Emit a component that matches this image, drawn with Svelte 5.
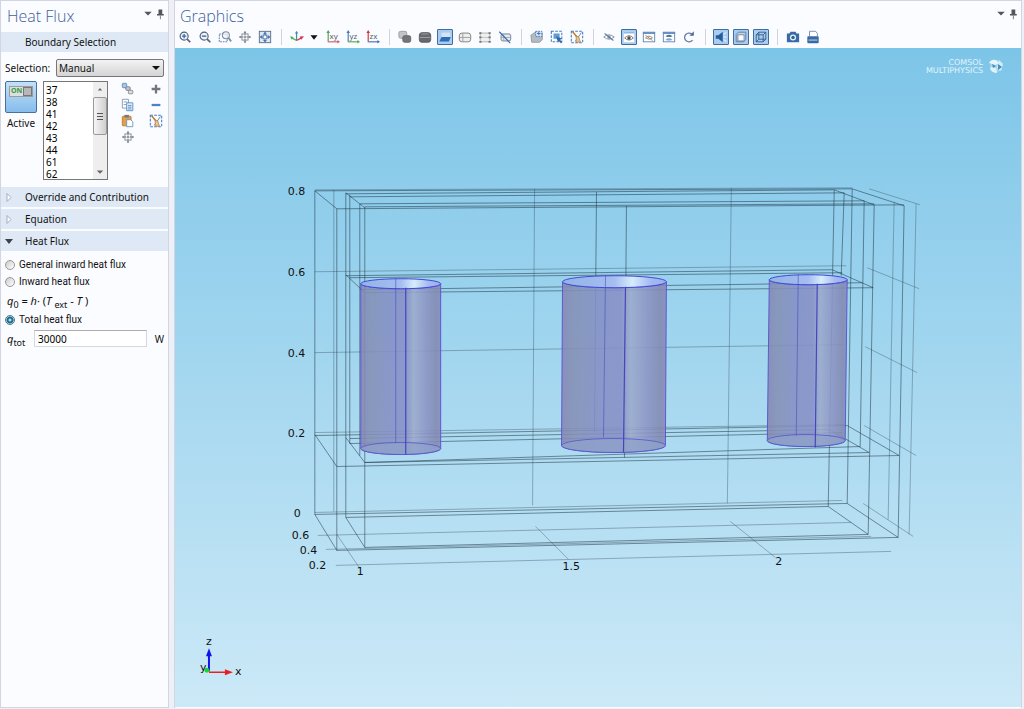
<script>
let mode = $state('total');
let active = $state(true);
let flux = $state('30000');

const boundaries = [37, 38, 41, 42, 43, 44, 61, 62, 63, 64];

const toolbar = [
  ['zoom-in', 'zoom-out', 'zoom-box', 'zoom-selected', 'zoom-extents'],
  ['default-view', 'view-menu', 'view-xy', 'view-yz', 'view-zx'],
  ['select-objects', 'select-domains', 'select-boundaries', 'select-edges', 'select-points', 'select-off'],
  ['select-all', 'select-box', 'deselect-box'],
  ['hide', 'show-selected', 'show-hidden', 'show-all', 'reset-hiding'],
  ['scene-light', 'transparency', 'wireframe'],
  ['snapshot', 'print'],
];
const pressed = ['select-boundaries', 'show-selected', 'scene-light', 'transparency', 'wireframe'];

// x1, y1, x2, y2
const grid = [
  [315, 190, 853, 188], [315, 272, 847, 266], [315, 353, 845, 345], [315, 433, 845, 425], [315, 513, 843, 501],
  [334, 190, 334, 512], [535, 189, 533, 506], [732, 188, 728, 504],
  [318, 536, 852, 523], [326, 550, 872, 537], [336, 566, 892, 552],
  [337, 535, 360, 569], [536, 527, 569, 560], [731, 522, 776, 558],
  [870, 189, 921, 205], [868, 268, 920, 289], [866, 347, 918, 373], [865, 426, 917, 456], [864, 504, 914, 537],
  [895, 202, 889, 520], [917, 204, 910, 535],
];
const edges = [
  [315, 191, 337, 209], [346, 193, 365, 208], [315, 191, 853, 189], [346, 194, 835, 190],
  [350, 197, 845, 193], [360, 204, 865, 201], [365, 207, 875, 204], [337, 209, 905, 205],
  [853, 189, 905, 206], [835, 190, 875, 205],
  [315, 191, 315, 515], [337, 209, 337, 551], [346, 193, 346, 518], [350, 195, 350, 444],
  [360, 204, 360, 456], [365, 207, 365, 548],
  [597, 192, 595, 433], [627, 206, 625, 458],
  [835, 190, 829, 507], [845, 193, 842, 276], [853, 189, 848, 504], [865, 201, 861, 447],
  [875, 205, 869, 535], [905, 206, 899, 538],
  [346, 275, 365, 293], [346, 276, 833, 270], [350, 278, 843, 273], [360, 290, 863, 283],
  [365, 293, 874, 288], [833, 270, 874, 288],
  [315, 435, 337, 467], [315, 436, 848, 426], [346, 438, 365, 463], [350, 439, 830, 430],
  [350, 444, 843, 433], [365, 463, 861, 447], [365, 463, 870, 453], [337, 467, 900, 456],
  [848, 426, 900, 456], [830, 430, 870, 453],
  [315, 515, 337, 551], [315, 515, 848, 504], [346, 518, 365, 548], [346, 518, 829, 507],
  [365, 548, 869, 535], [337, 551, 899, 538], [848, 504, 899, 538], [829, 507, 869, 535],
];
const cylinders = [
  {x: 401, y: 284, rx: 40, ry: 5, bx: 401, by: 449, bry: 6, seams: [[396, 279, 396, 443], [406, 288, 406, 455]]},
  {x: 615, y: 282, rx: 52, ry: 6, bx: 614, by: 446, bry: 7, seams: [[606, 276, 604, 438], [626, 287, 624, 453]]},
  {x: 809, y: 280, rx: 39, ry: 5, bx: 807, by: 441, bry: 6, seams: [[799, 275, 797, 436], [818, 284, 816, 448]]},
];
const labels = [
  ['0.8', 288, 195], ['0.6', 288, 276], ['0.4', 288, 357], ['0.2', 288, 437], ['0', 294, 518],
  ['0.6', 292, 540], ['0.4', 300, 555], ['0.2', 309, 570],
  ['1', 357, 576], ['1.5', 563, 571], ['2', 776, 566],
  ['z', 206, 646], ['x', 235, 676], ['y', 200, 672],
];
</script>

{#snippet lens()}
  <circle cx="7" cy="7" r="4.6" fill="#eef3fa" stroke="#566070" stroke-width="1.3" />
  <path d="M10.5 10.5L14 14" stroke="#566070" stroke-width="2" />
{/snippet}

{#snippet eye(y)}
  <path d="M3 {y}Q8 {y - 5} 13 {y}Q8 {y + 5} 3 {y}Z" fill="#fff" stroke="#6b6d62" />
  <circle cx="8" cy={y} r="2" fill="#4f5048" />
{/snippet}

{#snippet closedEye()}
  <path d="M2 8Q8 3 14 8Q8 13 2 8Z" fill="none" stroke="#808b9d" />
  <circle cx="8" cy="8" r="2" fill="#8992a2" />
  <path d="M3 4L13 12" stroke="#64779b" stroke-width="1.2" />
{/snippet}

{#snippet broom()}
  <path d="M3 2L8 8" stroke="#b97836" stroke-width="1.6" />
  <path d="M7 7L10 8L12 14H7Z" fill="#e9c690" stroke="#a57849" stroke-width=".8" />
{/snippet}

{#snippet windowFrame()}
  <rect x="1.5" y="2.5" width="13" height="11" fill="#fff" stroke="#5d7fae" />
  <path d="M1 3.5H15" stroke="#5d8bc6" stroke-width="2" />
{/snippet}

{#snippet crosshair()}
  <rect x="4.5" y="4.5" width="7" height="7" fill="#fff" stroke="#7c848f" />
  <path d="M8 2V6M8 10V14M2 8H6M10 8H14M6.5 8H9.5M8 6.5V9.5" stroke="#69717d" />
  <path d="M6.500 3L8 1L9.500 3ZM6.500 13L8 15L9.500 13ZM3 6.500L1 8L3 9.500ZM13 6.500L15 8L13 9.500Z" fill="#69717d" />
{/snippet}

{#snippet icon(name)}
  <svg viewBox="0 0 16 16" aria-hidden="true">
    {#if name === 'zoom-in'}
      {@render lens()}
      <path d="M4.5 7H9.5M7 4.5V9.5" stroke="#3270b8" stroke-width="1.6" />
    {:else if name === 'zoom-out'}
      {@render lens()}
      <path d="M4.5 7H9.5" stroke="#3270b8" stroke-width="1.6" />
    {:else if name === 'zoom-box'}
      <rect x="1.5" y="4.5" width="9" height="9" fill="none" stroke="#5f84b5" stroke-width="1.2" stroke-dasharray="2 1" />
      <circle cx="9" cy="6" r="4" fill="#eef3fa" fill-opacity=".7" stroke="#858d9a" stroke-width="1.2" />
      <path d="M12 9L15 13" stroke="#858d9a" stroke-width="2" />
    {:else if name === 'zoom-selected' || name === 'center'}
      {@render crosshair()}
    {:else if name === 'zoom-extents'}
      <rect x="1.5" y="1.5" width="13" height="13" fill="#dbe8f6" stroke="#5a6678" />
      <path d="M8 2V14M2 8H14" stroke="#4777b8" />
      <path d="M5.5 5L8 2L10.5 5ZM5.5 11L8 14L10.5 11ZM5 5.5L2 8L5 10.5ZM11 5.5L14 8L11 10.5Z" fill="#4777b8" />
      <rect x="6" y="6" width="4" height="4" fill="#fff" stroke="#687c97" stroke-width=".8" />
    {:else if name === 'default-view'}
      <path d="M7.5 2V12" stroke="#438cb2" stroke-width="1.4" />
      <path d="M5.5 4L7.5 1L9.5 4Z" fill="#438cb2" />
      <path d="M7.5 12L2 9" stroke="#4fae58" stroke-width="1.5" />
      <path d="M0 7L4 8L2 11Z" fill="#4fae58" />
      <path d="M7.5 12L13 9" stroke="#d43751" stroke-width="1.5" />
      <path d="M11 7.5L16 7L13 11Z" fill="#d43751" />
    {:else if name === 'view-menu'}
      <path d="M4 6H12L8 11Z" fill="#111" />
    {:else if name === 'view-xy' || name === 'view-yz' || name === 'view-zx'}
      <path d="M2.5 2V13" stroke={name === 'view-xy' ? '#4f9f55' : name === 'view-yz' ? '#3f78bd' : '#c8333f'} stroke-width="1.3" />
      <path d="M2 13.5H14" stroke={name === 'view-xy' ? '#d95862' : name === 'view-yz' ? '#55a948' : '#4272b9'} stroke-width="1.3" />
      <path d="M.5 3.5L2.5 0L4.5 3.5Z" fill={name === 'view-xy' ? '#4f9f55' : name === 'view-yz' ? '#3f78bd' : '#c8333f'} />
      <path d="M13 11.5L16 13.5L13 15.5Z" fill={name === 'view-xy' ? '#d95862' : name === 'view-yz' ? '#55a948' : '#4272b9'} />
      <text x="4" y="10" class="axis-name">{name.slice(5)}</text>
    {:else if name === 'select-objects'}
      <rect x="1" y="1.5" width="9" height="8" rx="2" fill="#c2c4c7" stroke="#999" />
      <rect x="5.5" y="6.5" width="9" height="7.5" rx="2" fill="#737579" stroke="#606367" />
    {:else if name === 'select-domains'}
      <rect x="1.5" y="3" width="13" height="11" rx="3" fill="#66696d" stroke="#55585d" />
      <path d="M2 8.5H14" stroke="#a1a4a8" />
      <path d="M4 4.5H12" stroke="#a1a4a8" />
    {:else if name === 'select-boundaries'}
      <path d="M4 3H14V8H4Z" fill="#d5e2f2" />
      <path d="M4 8H14.5L12.5 13H1.5Z" fill="#286dba" />
    {:else if name === 'select-edges'}
      <rect x="1.5" y="3.5" width="13" height="10" rx="3" fill="#eee" stroke="#777" />
      <path d="M5.5 3.5V13M2 8.5H14" stroke="#999" />
    {:else if name === 'select-points'}
      <rect x="2.5" y="3.5" width="11" height="10" fill="#f0f0f0" stroke="#aaa" />
      <path d="M3 8.5H13" stroke="#bbb" />
      <path d="M1.5 3.5H4M1.5 8.5H4M1.5 13.5H4M12 3.5H14.500M12 8.5H14.500M12 13.5H14.500" stroke="#777" stroke-width="2" />
    {:else if name === 'select-off'}
      <rect x="3.5" y="4.5" width="11" height="8" rx="2" fill="#e6e9ed" stroke="#667386" />
      <path d="M6.5 5V12M4 8.5H14" stroke="#a0a8b2" />
      <path d="M1.5 2L14 15" stroke="#356eb4" stroke-width="1.4" />
    {:else if name === 'select-all'}
      <path d="M1 6L5 3H14V11L11 14H2Z" fill="#b5bbc4" stroke="#91979f" />
      <rect x="6.5" y="1.5" width="7" height="6" fill="#d8e8f8" stroke="#4177b7" stroke-dasharray="2 1" />
      <path d="M8 4H12M10 2V6" stroke="#3d6ca6" />
    {:else if name === 'select-box'}
      <rect x="1.5" y="1.5" width="12" height="12" fill="none" stroke="#3f7cc0" stroke-width="1.2" stroke-dasharray="3 1.5" />
      <rect x="4" y="4" width="7" height="6" fill="#5f9cda" />
      <path d="M7 7L14 10L11.5 11L14 14L12.5 15L10 12.5L9 14Z" fill="#35689f" />
    {:else if name === 'deselect-box' || name === 'clear'}
      <rect x="1.5" y="1.5" width="13" height="13" fill="none" stroke="#3f7cc0" stroke-width="1.2" stroke-dasharray="3 1.5" />
      <path d="M13 3L6 13" stroke="#557ba8" />
      {@render broom()}
    {:else if name === 'hide'}
      {@render closedEye()}
    {:else if name === 'show-selected'}
      <rect x="2" y="2" width="12" height="12" fill="#fff" />
      <path d="M2 3H14" stroke="#8fb8e3" stroke-width="2" />
      {@render eye(9)}
    {:else if name === 'show-hidden'}
      {@render windowFrame()}
      <path d="M4 9Q8 5 12 9Q8 12 4 9ZM4 6L12 12" fill="none" stroke="#8b806e" />
    {:else if name === 'show-all'}
      {@render windowFrame()}
      <path d="M4 7Q8 4 12 7Q8 9 4 7Z" fill="#56779e" />
      <path d="M4 11Q8 8 12 11Q8 13 4 11Z" fill="#83a6ce" />
    {:else if name === 'reset-hiding'}
      <path d="M12 11.5A5 5 0 1 1 11.5 5" fill="none" stroke="#657ba0" stroke-width="1.5" />
      <path d="M8.5 6.5H13.5V1.5Z" fill="#4f6b98" />
    {:else if name === 'scene-light'}
      <path d="M2 6H5L10 2V14L5 10H2Z" fill="#245d9f" />
      <path d="M11 5L14 3M11 8H14M11 11L14 13" stroke="#fff" />
    {:else if name === 'transparency'}
      <path d="M2.5 5L5 2.5H13.5V10.5L11 13.5H2.5Z" fill="#bcd4ed" stroke="#5e7595" />
      <rect x="4.5" y="5.5" width="7" height="7" fill="#f7fbff" stroke="#718298" />
    {:else if name === 'wireframe'}
      <path d="M2.5 5.5H10.5V13.5H2.5ZM5.5 2.5H13.5V10.5H5.5ZM2.5 5.5L5.5 2.5M10.5 5.5L13.5 2.5M10.5 13.5L13.5 10.5M2.5 13.5L5.5 10.5" fill="none" stroke="#315985" />
    {:else if name === 'snapshot'}
      <path d="M1 4H4L5 2H11L12 4H15V14H1Z" fill="#386ba5" />
      <circle cx="8" cy="8.5" r="3.5" fill="#e7f1fb" />
      <circle cx="8" cy="8.5" r="2" fill="#315f94" />
    {:else if name === 'print'}
      <path d="M4 7V1.5H11L13 4V7" fill="#fff" stroke="#6f87a3" />
      <rect x="1.5" y="7" width="13" height="8" rx="1" fill="#386ba5" />
      <path d="M3 11.5H13" stroke="#d9e6f4" />
    {:else if name === 'pin'}
      <path d="M6 2H11V8H13V10H4V8H6Z" fill="#51555d" />
      <path d="M8.5 10V15" stroke="#51555d" />
    {:else if name === 'menu'}
      <path d="M3 5H13L8 10Z" fill="#51555d" />
    {:else if name === 'create'}
      <path d="M3 4L12 12" stroke="#8494aa" stroke-width="2" />
      <rect x="1.5" y="1.5" width="5" height="5" rx="1" fill="#a9c5e6" stroke="#6488b5" />
      <rect x="5.5" y="5.5" width="5" height="4" rx="1" fill="#b7c6d8" stroke="#788594" />
      <rect x="8.5" y="9.5" width="5" height="4" rx="1" fill="#ddd" stroke="#888" />
    {:else if name === 'copy'}
      <path d="M1.5 1.5H8.5V11.5H1.5Z" fill="#fff" stroke="#8094ac" />
      <path d="M3 4.5H7M3 7.5H6" stroke="#8094ac" />
      <path d="M6.5 5.5H13.5V14.5H6.5Z" fill="#e3f0fc" stroke="#5288c4" />
      <path d="M8 8.5H12M8 10.5H12M8 12.5H12" stroke="#5288c4" />
    {:else if name === 'paste'}
      <rect x="1.5" y="2.5" width="10" height="11" rx="1" fill="#dda04d" stroke="#b57c35" />
      <rect x="4" y="1" width="5" height="3" fill="#777" />
      <path d="M6.5 6.5H11L13.5 9V14.5H6.5Z" fill="#fff" stroke="#6a91bd" />
    {:else if name === 'add'}
      <path d="M8 3V13M3 8H13" stroke="#70757e" stroke-width="2.6" />
    {:else if name === 'remove'}
      <path d="M3 8H13" stroke="#4c83bd" stroke-width="2.6" />
    {/if}
  </svg>
{/snippet}

{#snippet windowTools()}
  <div class="window-tools">
    <button aria-label="Window menu">{@render icon('menu')}</button>
    <button aria-label="Pin">{@render icon('pin')}</button>
  </div>
{/snippet}

<div class="desktop">
  <aside class="panel settings">
    <header>
      <h1>Heat Flux</h1>
      {@render windowTools()}
    </header>
    <h2 class="section">Boundary Selection</h2>
    <div class="selection">
      <div class="choice">
        <label for="selection">Selection:</label>
        <select id="selection">
          <option>Manual</option>
          <option>All boundaries</option>
        </select>
      </div>
      <div class="picker">
        <div class="toggle">
          <button id="active" aria-label="Active" aria-pressed={active} onclick={() => active = !active}>
            <span class="switch"><b>{active ? 'ON' : 'OFF'}</b><i></i></span>
          </button>
          <label for="active">Active</label>
        </div>
        <div class="listbox">
          <select multiple size="8" aria-label="Boundaries">
            {#each boundaries as b}
            <option>{b}</option>
            {/each}
          </select>
          <div class="scrollbar" aria-hidden="true">
            <svg viewBox="0 0 12 14"><path d="M4 8L6 5.5L8 8Z" fill="#666" /></svg>
            <div class="thumb"></div>
            <svg viewBox="0 0 12 14"><path d="M3 6L6 9L9 6Z" fill="#666" /></svg>
          </div>
        </div>
        <div class="tools">
          <button aria-label="Create selection">{@render icon('create')}</button>
          <button aria-label="Add">{@render icon('add')}</button>
          <button aria-label="Copy">{@render icon('copy')}</button>
          <button aria-label="Remove">{@render icon('remove')}</button>
          <button aria-label="Paste">{@render icon('paste')}</button>
          <button aria-label="Clear">{@render icon('clear')}</button>
          <button aria-label="Zoom to selection">{@render icon('center')}</button>
        </div>
      </div>
    </div>
    <div class="sections">
      {#each ['Override and Contribution', 'Equation', 'Heat Flux'] as title, i}
      <h2><button class="section" aria-expanded={i === 2}>
        <svg viewBox="0 0 16 16" aria-hidden="true">
          {#if i === 2}
          <path d="M4 6H12L8 11Z" fill="#3d4148" />
          {:else}
          <path d="M6 4.5L10 8.5L6 12.5Z" fill="#fff" stroke="#a5adb8" />
          {/if}
        </svg>
        {title}
      </button></h2>
      {/each}
    </div>
    <div class="flux">
      <label><input type="radio" name="mode" value="general" bind:group={mode}>General inward heat flux</label>
      <label><input type="radio" name="mode" value="inward" bind:group={mode}>Inward heat flux</label>
      <p class="formula"><i>q</i><sub>0</sub> = <i>h</i>· (<i>T</i> <sub>ext</sub> - <i>T</i> )</p>
      <label><input type="radio" name="mode" value="total" bind:group={mode}>Total heat flux</label>
      <div class="value">
        <label for="qtot"><i>q</i><sub>tot</sub></label>
        <input id="qtot" type="text" bind:value={flux}>
        <span>W</span>
      </div>
    </div>
  </aside>

  <main class="panel graphics">
    <header>
      <h1>Graphics</h1>
      {@render windowTools()}
    </header>
    <div class="toolbar">
      {#each toolbar as group}
      <div class="group">
        {#each group as name}
        <button class:pressed={pressed.includes(name)} class:narrow={name === 'view-menu'} aria-label={name}>{@render icon(name)}</button>
        {/each}
      </div>
      {/each}
    </div>
    <svg class="scene" viewBox="175 48 847 660" role="img" aria-label="Geometry with selected cylinder boundaries">
      <defs>
        <linearGradient id="sky" x1="0" y1="0" x2="0" y2="1">
          <stop offset="0" stop-color="#7dc5e8" />
          <stop offset="1" stop-color="#cce9f7" />
        </linearGradient>
        <linearGradient id="side">
          <stop offset="0" stop-color="#8585b4" />
          <stop offset=".12" stop-color="#8490b5" />
          <stop offset=".35" stop-color="#858fc4" />
          <stop offset=".57" stop-color="#878fc6" />
          <stop offset=".66" stop-color="#9caacb" />
          <stop offset=".82" stop-color="#8b93c4" />
          <stop offset=".94" stop-color="#8189b0" />
          <stop offset="1" stop-color="#8c87bd" />
        </linearGradient>
        <linearGradient id="rim">
          <stop offset="0" stop-color="#92b4e6" />
          <stop offset=".5" stop-color="#a5bdf0" />
          <stop offset=".67" stop-color="#d6edfb" />
          <stop offset=".85" stop-color="#a5baf1" />
          <stop offset="1" stop-color="#9caeea" />
        </linearGradient>
      </defs>
      <rect x="175" y="48" width="847" height="660" fill="url(#sky)" />

      <g stroke="#435d6b" stroke-opacity=".55" stroke-width=".8">
        {#each grid as [x1, y1, x2, y2]}
        <line {x1} {y1} {x2} {y2} />
        {/each}
      </g>
      <g stroke="#1d333f" stroke-opacity=".65" stroke-width=".8">
        {#each edges as [x1, y1, x2, y2]}
        <line {x1} {y1} {x2} {y2} />
        {/each}
      </g>

      {#each cylinders as c}
      <path d="M{c.x - c.rx} {c.y}A{c.rx} {c.ry} 0 0 0 {c.x + c.rx} {c.y}L{c.bx + c.rx} {c.by}A{c.rx} {c.bry} 0 0 1 {c.bx - c.rx} {c.by}Z" fill="url(#side)" fill-opacity=".88" stroke="#5550cf" stroke-width=".9" />
      <ellipse cx={c.bx} cy={c.by} rx={c.rx} ry={c.bry} fill="#8fa2c9" fill-opacity=".75" stroke="#5753cc" stroke-width=".8" />
      <ellipse cx={c.x} cy={c.y} rx={c.rx} ry={c.ry} fill="url(#rim)" stroke="#4447d8" />
      {#each c.seams as [x1, y1, x2, y2], i}
      <line {x1} {y1} {x2} {y2} stroke="#4845bd" stroke-opacity={i ? 1 : .7} stroke-width={i ? 1.2 : .8} />
      {/each}
      {/each}

      <path d="M209 672V656" stroke="#1212ef" stroke-width="2" />
      <path d="M206 657L209 649L212 657Z" fill="#1212ef" />
      <path d="M209 673H227" stroke="#ed1c24" stroke-width="1.5" />
      <path d="M225 670L233 673L225 676Z" fill="#ed1c24" />
      <circle cx="207" cy="671" r="2.5" fill="#12d92b" />

      {#each labels as [text, x, y]}
      <text {x} {y}>{text}</text>
      {/each}

      <g class="brand" text-anchor="end">
        <text x="984" y="65">COMSOL</text>
        <text x="984" y="73">MULTIPHYSICS</text>
      </g>
      <circle cx="997" cy="66" r="6" fill="#a9d7ee" />
      <path d="M990 63Q992 59 997 60L1000 63L996 65Z" fill="#e6f5fc" />
      <path d="M1000 60L1004 64L1002 71L998 68Z" fill="#d4edf8" />
      <path d="M992 67L997 68L998 73Q993 73 991 69Z" fill="#dff2fa" />
      <path d="M999 64L1003 67L999 70ZM993 64L997 66L994 68Z" fill="#478fba" />
    </svg>
  </main>
</div>

<style>
:global(body) {
  margin: 0;
  background: #eef0f8;
}
.desktop {
  display: flex;
  gap: 5px;
  min-height: 100vh;
  box-sizing: border-box;
  padding: 0 2px 1px 0;
  font: 10px/14px "Noto Sans", "Open Sans", sans-serif;
  color: #111;
}
.panel {
  box-sizing: border-box;
  border: 1px solid #d3d5e0;
  background: #fbfcff;
}
.settings {
  flex: 0 0 169px;
  min-width: 0;
}
.graphics {
  flex: 1;
  min-width: 0;
  border-bottom: 0;
}
header {
  display: flex;
  justify-content: space-between;
  height: 31px;
  padding: 0 2px 0 6px;
}
.graphics header {
  height: 26px;
  padding-left: 5px;
}
h1 {
  margin: 0;
  font: 300 16px/30px "Open Sans", "Noto Sans", sans-serif;
  color: #3d619b;
}
h2 {
  margin: 0;
  font: inherit;
}
button {
  padding: 0;
  border: 0;
  background: none;
  font: inherit;
  color: inherit;
}
button svg {
  display: block;
  width: 16px;
  height: 16px;
}
.window-tools {
  display: flex;
  align-items: center;
  height: 26px;
}
.window-tools button {
  width: 12px;
}
.window-tools svg {
  width: 12px;
  height: 12px;
}
.section {
  display: flex;
  align-items: center;
  gap: 8px;
  width: 100%;
  height: 20px;
  box-sizing: border-box;
  background: #dfe9f5;
  text-align: left;
}
h2.section {
  padding-left: 24px;
}
.selection {
  padding: 7px 4px;
}
.choice {
  display: flex;
  align-items: center;
  white-space: nowrap;
}
.choice select {
  appearance: none;
  width: 108px;
  height: 18px;
  margin-left: auto;
  padding: 0 2px;
  border: 1px solid #777;
  border-radius: 2px;
  background: linear-gradient(#f3f3f3, #d4d4d4);
  font: inherit;
  color: inherit;
}
/* drop-down arrow */
.choice::after {
  content: "";
  margin: 0 4px 0 -12px;
  border: 4px solid transparent;
  border-top-color: #111;
  border-bottom: 0;
  pointer-events: none;
}
.picker {
  display: flex;
  gap: 6px;
  margin-top: 4px;
}
.toggle {
  display: flex;
  flex-direction: column;
  align-items: center;
  gap: 3px;
  width: 32px;
}
.toggle button {
  width: 32px;
  height: 32px;
  padding-bottom: 12px;
  border: 1px solid #496f9b;
  border-radius: 2px;
  background: linear-gradient(#c4e0f8, #86bdec);
}
.switch {
  display: flex;
  align-items: center;
  justify-content: space-between;
  width: 24px;
  height: 11px;
  margin: 0 auto;
  padding-left: 1px;
  border: 1px solid #9a9c9e;
  background: #dedede;
  box-sizing: border-box;
}
.switch b {
  font-size: 7px;
  color: #2e9c45;
}
.switch i {
  width: 7px;
  height: 7px;
  border: 1px solid #777;
  background: #b7b7b7;
}
.listbox {
  display: flex;
  width: 65px;
  height: 99px;
  box-sizing: border-box;
  border: 1px solid #777;
  background: #fff;
}
.listbox select {
  flex: 1;
  min-width: 0;
  height: 100%;
  padding: 1px 0 0;
  border: 0;
  background: none;
  font: inherit;
  scrollbar-width: none;
}
.listbox option {
  display: block;
  height: 12px;
  min-height: 0;
  padding: 0 2px;
  line-height: 12px;
}
.scrollbar {
  display: flex;
  flex-direction: column;
  width: 14px;
  background: #eee;
}
.scrollbar svg {
  width: 14px;
  height: 15px;
}
.scrollbar .thumb {
  display: flex;
  height: 38px;
  margin-bottom: auto;
  box-sizing: border-box;
  border: 1px solid #999;
  border-radius: 2px;
  background: linear-gradient(90deg, #f5f5f5, #cfcfcf);
}
.thumb::after {
  content: "";
  width: 6px;
  height: 7px;
  margin: auto;
  background: repeating-linear-gradient(#555 0 1px, transparent 1px 3px);
}
.tools {
  display: grid;
  grid-template-columns: 16px 16px;
  grid-auto-rows: 16px;
  column-gap: 12px;
  margin-left: 6px;
}
.tools svg {
  width: 14px;
  height: 14px;
  margin: 1px;
}
.sections {
  display: grid;
  gap: 2px;
}
.sections svg {
  width: 16px;
  height: 16px;
}
.flux {
  display: flex;
  flex-direction: column;
  gap: 3px;
  padding: 7px 4px;
}
.flux > label {
  display: flex;
  align-items: center;
  gap: 4px;
  font-family: Roboto, "Noto Sans", sans-serif;
}
input[type="radio"] {
  appearance: none;
  width: 10px;
  height: 10px;
  margin: 0;
  border: 1px solid #999;
  border-radius: 50%;
  background: linear-gradient(135deg, #ccc, #fff);
}
input[type="radio"]:checked {
  border-color: #52758c;
  background: radial-gradient(circle, #9ce0ef 0 1px, #1d6b87 2px 3px, #e3eff4 4px);
}
.formula {
  margin: 0;
  padding-left: 2px;
  font-size: 11px;
  line-height: 18px;
}
.formula sub, .value sub {
  font-size: 9px;
  line-height: 0;
  vertical-align: -3px;
}
.value {
  display: flex;
  align-items: center;
  gap: 8px;
}
.value label {
  width: 19px;
  padding-left: 2px;
  font-size: 11px;
}
.value input {
  flex: 1;
  min-width: 0;
  height: 17px;
  box-sizing: border-box;
  padding: 0 3px;
  border: 1px solid #d5d8dd;
  border-top-color: #abadb3;
  background: #fff;
  font: inherit;
}
.toolbar {
  display: flex;
  align-items: center;
  height: 21px;
  box-sizing: border-box;
  padding: 0 0 1px 2px;
  overflow: hidden;
}
.group {
  display: flex;
  gap: 4px;
}
.group + .group {
  margin-left: 8px;
  padding-left: 7px;
  border-left: 1px solid #d0d3dc;
}
.group button {
  width: 16px;
  height: 16px;
  box-sizing: border-box;
}
.group svg {
  width: 14px;
  height: 14px;
  margin: 1px;
}
.group .narrow {
  width: 12px;
}
.narrow svg {
  margin-left: -2px;
}
.group .pressed {
  border: 1px solid #3f6ca6;
  border-radius: 1px;
  background: #a9cdf1;
}
.group .pressed svg {
  margin: 0;
}
.axis-name {
  font: 9px "Noto Sans", sans-serif;
  fill: #59616a;
}
.scene {
  display: block;
  width: 100%;
}
.scene text {
  font: 11px "DejaVu Sans", sans-serif;
  fill: #111;
}
.scene .brand text {
  font-size: 8px;
  fill: #e2f3fc;
}
</style>
